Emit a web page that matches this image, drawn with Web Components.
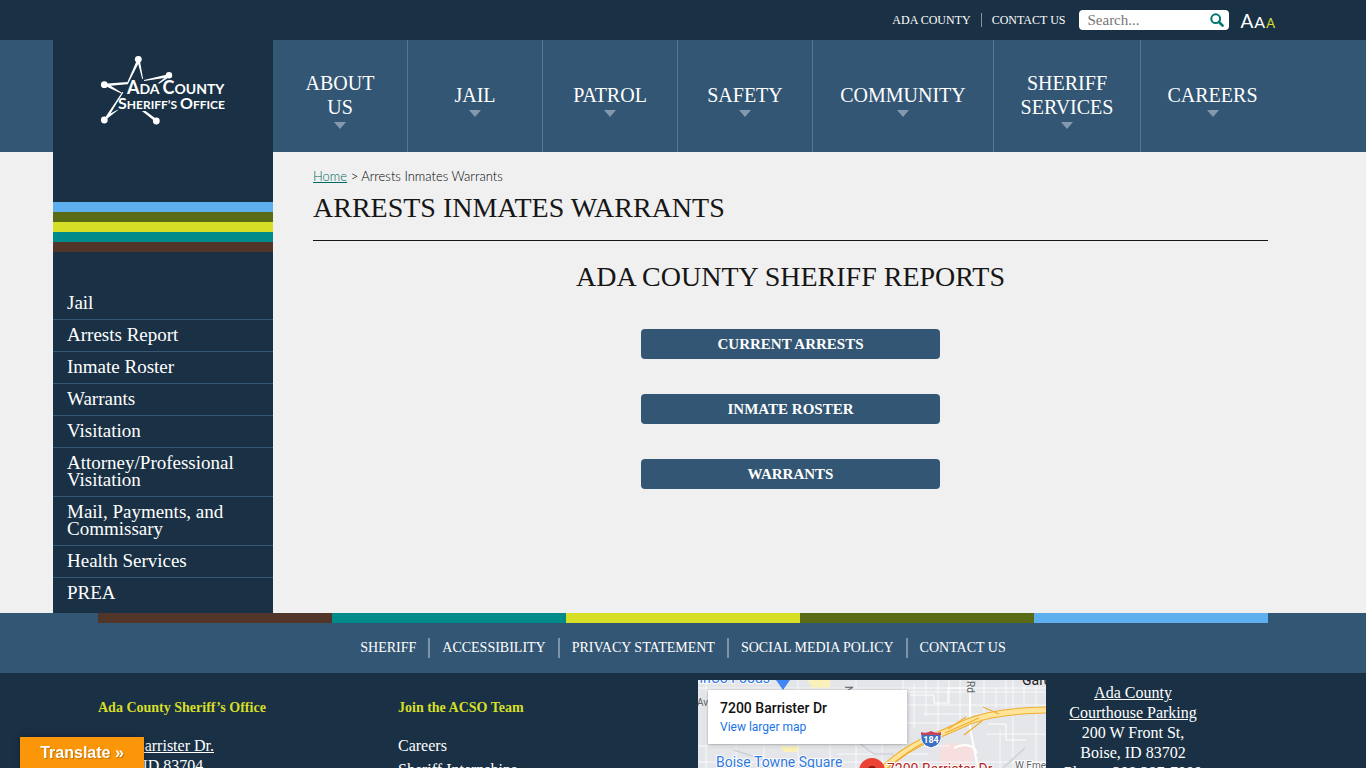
<!DOCTYPE html>
<html lang="en">
<head>
<meta charset="utf-8">
<meta name="viewport" content="width=device-width, initial-scale=1">
<title>Arrests Inmates Warrants - Ada County Sheriff's Office</title>
<style>
:root{--navy:#1a3145;--blue:#335674;--rule:#54789a;--paper:#f0f0f0;--lime:#d6df25;--teal:#008b8b;--olive:#5a6b16;--sky:#5dafef;--brown:#503528}
html{scrollbar-width:none}
body{margin:0;background:var(--navy);color:#161616;font-family:"Liberation Serif","Times New Roman",serif}
</style>
</head>
<body>
<ac-page></ac-page>
<script>
const define = (name, html) => {
  const t = document.createElement('template');
  t.innerHTML = html;
  customElements.define(name, class extends HTMLElement {
    constructor() {
      super();
      this.attachShadow({mode: 'open'}).append(t.content.cloneNode(true));
    }
  });
};

define('ac-stripes', `
<style>
:host{display:grid;grid-auto-rows:10px}
:host([row]){grid-auto-flow:column;grid-auto-columns:1fr}
i{height:10px}
.a{background:var(--sky)}.b{background:var(--olive)}.c{background:var(--lime)}.d{background:var(--teal)}.e{background:var(--brown)}
:host([row]) .a{order:5}:host([row]) .b{order:4}:host([row]) .c{order:3}:host([row]) .d{order:2}:host([row]) .e{order:1}
</style><i class="a"></i><i class="b"></i><i class="c"></i><i class="d"></i><i class="e"></i>`);

define('ac-search', `
<style>
:host{display:block}
form{display:flex;align-items:center;width:150px;height:20px;box-sizing:border-box;background:#fff;border-radius:4px;padding:0 5px 0 8px}
input{flex:1;min-width:0;border:0;outline:0;padding:0;background:none;font:15px/20px "Liberation Serif",serif;height:20px}
input::placeholder{color:#757575}
button{border:0;background:none;padding:0;display:flex}
</style>
<form role="search"><input type="text" placeholder="Search..." aria-label="Search">
<button type="button" aria-label="Submit search"><svg width="14" height="14" viewBox="0 0 14 14" fill="none" stroke="#00756f"><circle cx="5.7" cy="5.7" r="4.4" stroke-width="2"/><path d="M9 9l3.6 3.6" stroke-width="2.6" stroke-linecap="round"/></svg></button></form>`);

define('ac-topbar', `
<style>
:host{display:block;background:var(--navy);color:#fff}
.in{max-width:1170px;margin:0 auto;height:40px;display:flex;justify-content:flex-end;align-items:center}
nav{display:flex;align-items:center;margin-right:14px}
a{color:#fff;text-decoration:none;font-size:12px;line-height:14px}
a+a{border-left:1px solid #8094a4;margin-left:10px;padding-left:10px}
.sizes{display:flex;align-items:baseline;gap:1px;margin:4px -7px 0 11px}
.sizes button{border:0;background:none;padding:0;color:#fff;font-family:Lato,sans-serif;font-size:19px;line-height:20px}
.sizes .m{font-size:16px}.sizes .s{font-size:13px;color:var(--lime)}
</style>
<div class="in"><nav><a href="#">ADA COUNTY</a><a href="#">CONTACT US</a></nav><ac-search></ac-search>
<div class="sizes"><button aria-label="Large text">A</button><button class="m" aria-label="Medium text">A</button><button class="s" aria-label="Small text">A</button></div></div>`);

define('ac-nav-item', `
<style>
:host{display:flex;border-left:1px solid var(--rule)}
:host(:first-of-type){border-left:0}
a{flex:1;display:flex;flex-direction:column;align-items:center;justify-content:center;padding:8px 24px 0;text-align:center;color:#fff;text-decoration:none;font-size:20px;line-height:24px}
svg{margin-top:3px;fill:#8499ad}
</style><a href="#"><slot></slot><svg width="12" height="7"><path d="M0 0h12L6 7z"/></svg></a>`);

define('ac-nav', `
<style>
:host{display:grid;grid-template-columns:134fr 135fr 135fr 135fr 181fr 147fr 144fr;height:112px;margin-right:-16px}
</style>
<ac-nav-item><span>ABOUT<br>US</span></ac-nav-item><ac-nav-item>JAIL</ac-nav-item><ac-nav-item>PATROL</ac-nav-item><ac-nav-item>SAFETY</ac-nav-item><ac-nav-item>COMMUNITY</ac-nav-item><ac-nav-item>SHERIFF SERVICES</ac-nav-item><ac-nav-item>CAREERS</ac-nav-item>`);

define('ac-logo', `
<style>
:host{display:block}
a{display:block;height:78px}
text{font-family:Lato,sans-serif;font-weight:700;font-size:14px;fill:#fff}
.c{font-size:18px}
.second{font-size:12px}
.second .c{font-size:16px}
</style>
<a href="#" aria-label="Ada County Sheriff's Office"><svg width="130" height="78" viewBox="98 50 130 78" fill="#fff">
<circle cx="138.3" cy="59.3" r="3.4"/><circle cx="104.3" cy="84.7" r="3.4"/><circle cx="169" cy="75.3" r="3.2"/><circle cx="104.3" cy="120" r="3.4"/><circle cx="156.3" cy="121" r="3.4"/>
<path d="M137 60L126.600 84l1.200.3L138.200 64l4 15h.9L139.800 60z"/>
<path d="M104.300 83.800L127.500 82l-.3 2.200-16.500 1.600 11.500 7.200-1 .6-16.500-7.800z"/>
<path d="M169.300 74l-25.300 6v1l20.500-3-7 5.600h2l10.500-7z"/>
<path d="M103.800 119.500L122.300 92l1 .5L110.500 113.500l8-4.300-1 1.300-12.500 9.800z"/>
<path d="M157 119.500L145.500 111h-3.600l13.600 10.800z"/>
<text x="127" y="94"><tspan class="c">A</tspan>DA <tspan class="c">C</tspan>OUNTY</text>
<text class="second" x="118" y="109"><tspan class="c">S</tspan>HERIFF’S <tspan class="c">O</tspan>FFICE</text>
</svg></a>`);

define('ac-side-link', `
<style>
:host{display:block;border-bottom:1px solid #345876}
:host(:last-child){border:0}
a{display:block;padding:6px 14px 8px;color:#fff;text-decoration:none;font-size:19px;line-height:17px}
</style><a href="#"><slot></slot></a>`);

define('ac-sidebar', `
<style>
:host{display:block;background:var(--navy);margin-left:-45px}
.logo{height:152px;padding:10px 0 0 45px}
nav{padding:36px 0 4px}
</style>
<div class="logo"><ac-logo></ac-logo></div><ac-stripes></ac-stripes>
<nav><ac-side-link>Jail</ac-side-link><ac-side-link>Arrests Report</ac-side-link><ac-side-link>Inmate Roster</ac-side-link><ac-side-link>Warrants</ac-side-link><ac-side-link>Visitation</ac-side-link><ac-side-link>Attorney/Professional Visitation</ac-side-link><ac-side-link>Mail, Payments, and Commissary</ac-side-link><ac-side-link>Health Services</ac-side-link><ac-side-link>PREA</ac-side-link></nav>`);

define('ac-button', `
<style>
:host{display:block;width:100%;max-width:299px}
a{display:block;border-radius:4px;background:var(--blue);color:#fff;text-align:center;text-decoration:none;font-weight:700;font-size:15px;line-height:30px}
</style><a href="#"><slot></slot></a>`);

define('ac-main', `
<style>
:host{display:block;padding:16px 0 0 40px}
.crumb{font:300 13px/16px Lato,sans-serif;color:#000}
.crumb a{color:#006a66}
h1,h2{font-weight:400;font-size:28px;line-height:32px;margin:0}
h1{margin-top:8px;padding-bottom:16px;border-bottom:1px solid #161616}
h2{margin-top:20px;text-align:center}
.list{display:flex;flex-direction:column;align-items:center;gap:35px;margin:36px 0 0}
</style>
<div class="crumb"><a href="#">Home</a> &gt; Arrests Inmates Warrants</div>
<h1>ARRESTS INMATES WARRANTS</h1>
<h2>ADA COUNTY SHERIFF REPORTS</h2>
<div class="list"><ac-button>CURRENT ARRESTS</ac-button><ac-button>INMATE ROSTER</ac-button><ac-button>WARRANTS</ac-button></div>`);

define('ac-footer-nav', `
<style>
:host{display:block;background:var(--blue)}
ac-stripes{max-width:1170px;margin:0 auto}
nav{display:flex;justify-content:center;align-items:center;height:50px}
a{color:#fff;text-decoration:none;font-size:14px;line-height:20px;padding:0 12px}
a+a{border-left:2px solid #7c93a8}
</style><ac-stripes row></ac-stripes>
<nav><a href="#">SHERIFF</a><a href="#">ACCESSIBILITY</a><a href="#">PRIVACY STATEMENT</a><a href="#">SOCIAL MEDIA POLICY</a><a href="#">CONTACT US</a></nav>`);

define('ac-map', `
<style>
:host{display:block;position:relative;overflow:hidden;background:#e3e5e9;height:200px}
svg{display:block;width:100%;height:100%}
text{font-family:Roboto,sans-serif}
.poi{fill:#3079e0;font-size:14px}.road{fill:#5f6368;font-size:10px}
.halo{paint-order:stroke;stroke:#fff;stroke-width:2px}
.card{position:absolute;left:10px;top:10px;width:199px;height:54px;box-sizing:border-box;padding:10px 12px;background:#fff;box-shadow:0 1px 4px rgba(0,0,0,.3);font:500 14px/16px Roboto,sans-serif;color:#111}
.card a{display:block;margin-top:4px;font-weight:400;font-size:12px;line-height:14px;color:#1a73e8;text-decoration:none}
</style>
<svg viewBox="0 0 348 200" preserveAspectRatio="xMidYMin slice">
<rect width="348" height="200" fill="#e4e6ea"/>
<path d="M242 66q18-8 34 4l-4 24h-30z" fill="#f7dfe0"/><path d="M110 0h22v8h-18zM82 66h20l-2 6H86z" fill="#faf0b8"/>
<path d="M0 8h348M0 25h348M0 66h252M0 82h348M202 43h60M288 54h60M140 74h90M210 12h138M225 34h60" stroke="#f8f9fa" stroke-width="1" fill="none"/>
<path d="M8 0v90M38 60v30M66 60v30M100 0v90M132 60v30M158 0v90M184 60v30M205 0v70M216 4v44M228 0v36M240 0v55M251 0v26M262 0v42M286 0v34M298 8v20M308 0v28M315 0v90M326 4v20M338 0v90M302 50v38" stroke="#f8f9fa" stroke-width="1" fill="none"/>
<path d="M272 0v48l8 40M0 90h348M256 68q12-6 20 0l3 5" stroke="#fff" stroke-width="2" fill="none"/>
<path d="M212 15h24v8h14V8h22M290 44h18v16h20" stroke="#fff" stroke-width="1" fill="none"/>
<path d="M160 62l16 12h20M305 88l22-20M36 70l30 10" stroke="#cdd1d6" stroke-width="1.500" fill="none"/>
<g fill="none"><path d="M180 94Q201 73 224 62Q254 49 272 41Q298 31 348 30" stroke="#efae2e" stroke-width="7"/><path d="M180 94Q201 73 224 62Q254 49 272 41Q298 31 348 30" stroke="#ffe49a" stroke-width="5"/><path d="M184 93Q205 74 227 62M247 53L281 38M250 49L268 37M285 27l16 7M266 55L284 41" stroke="#efae2e" stroke-width="1.200"/></g>
<path d="M78 0h14l-7 10z" fill="#4285f4"/>
<text class="poi halo" x="72" y="3" text-anchor="end">WinCo Foods</text>
<text class="poi halo" x="18" y="87">Boise Towne Square</text>
<text class="road" x="-1" y="26">Ave</text><text class="road" transform="translate(269 1) rotate(90)">Rd</text><text class="road" transform="translate(147 6) rotate(90)">N</text>
<text x="324" y="5" font-size="14" fill="#222">Garden City</text><text class="road halo" x="317" y="89">W Emerald St</text>
<path d="M223 53h20q2 12-10 15-12-3-10-15z" fill="#3a6fc4" stroke="#fff"/><path d="M223 52q5 2 10-1 5 3 10 1v3h-20z" fill="#c74458"/>
<text x="233" y="63" text-anchor="middle" font-size="9" font-weight="700" fill="#fff">184</text>
<path d="M174 78a13 13 0 0 1 13 13c0 9-10 12-13 25-3-13-13-16-13-25a13 13 0 0 1 13-13z" fill="#ea4335"/><circle cx="174" cy="91" r="5" fill="#8c1b12"/>
<text class="halo" x="189" y="94" font-size="14" fill="#b3261e">7200 Barrister Dr</text>
</svg>
<div class="card">7200 Barrister Dr<a href="#">View larger map</a></div>`);

define('ac-footer', `
<style>
:host{display:block;background:var(--navy);color:#fff}
.in{max-width:1170px;margin:0 auto;box-sizing:border-box;padding:7px 0 20px;display:grid;grid-template-columns:300fr 300fr 348fr 174fr 48fr;font-size:16px;line-height:20px}
h3{margin:18px 0;font-size:14px;line-height:20px;color:var(--lime)}
a{color:#fff}
p{margin:0}
ul{list-style:none;margin:0;padding:0;display:grid;gap:4px}
ul a{text-decoration:none}
.park{text-align:center;padding-top:3px}
</style>
<div class="in">
<section><h3>Ada County Sheriff’s Office</h3><p><a href="#">7200 Barrister Dr.</a><br>Boise, ID 83704</p></section>
<section><h3>Join the ACSO Team</h3><ul><li><a href="#">Careers</a></li><li><a href="#">Sheriff Internships</a></li></ul></section>
<ac-map></ac-map>
<section class="park"><a href="#">Ada County<br>Courthouse Parking</a><br>200 W Front St,<br>Boise, ID 83702<br>Phone: 208 287-7000</section>
</div>`);

define('ac-translate', `
<style>
:host{position:fixed;left:20px;bottom:0;z-index:5}
button{display:block;width:124px;height:31px;border:0;padding:0;background:#fb9608;color:#fff;font:700 16px/31px "Liberation Sans",Arial,sans-serif;text-shadow:1px 1px 1px rgba(0,0,0,.25);box-shadow:0 0 8px rgba(0,0,0,.3)}
</style><button><slot></slot></button>`);

define('ac-page', `
<style>
:host{display:block}
.body{background:linear-gradient(var(--blue) 112px,var(--paper) 112px)}
.in{max-width:1170px;margin:0 auto;display:grid;grid-template-columns:175px minmax(0,1fr)}
</style>
<ac-topbar></ac-topbar>
<div class="body"><div class="in"><ac-sidebar></ac-sidebar><div><ac-nav></ac-nav><ac-main></ac-main></div></div></div>
<ac-footer-nav></ac-footer-nav>
<ac-footer></ac-footer>
<ac-translate>Translate »</ac-translate>`);
</script>
</body>
</html>
